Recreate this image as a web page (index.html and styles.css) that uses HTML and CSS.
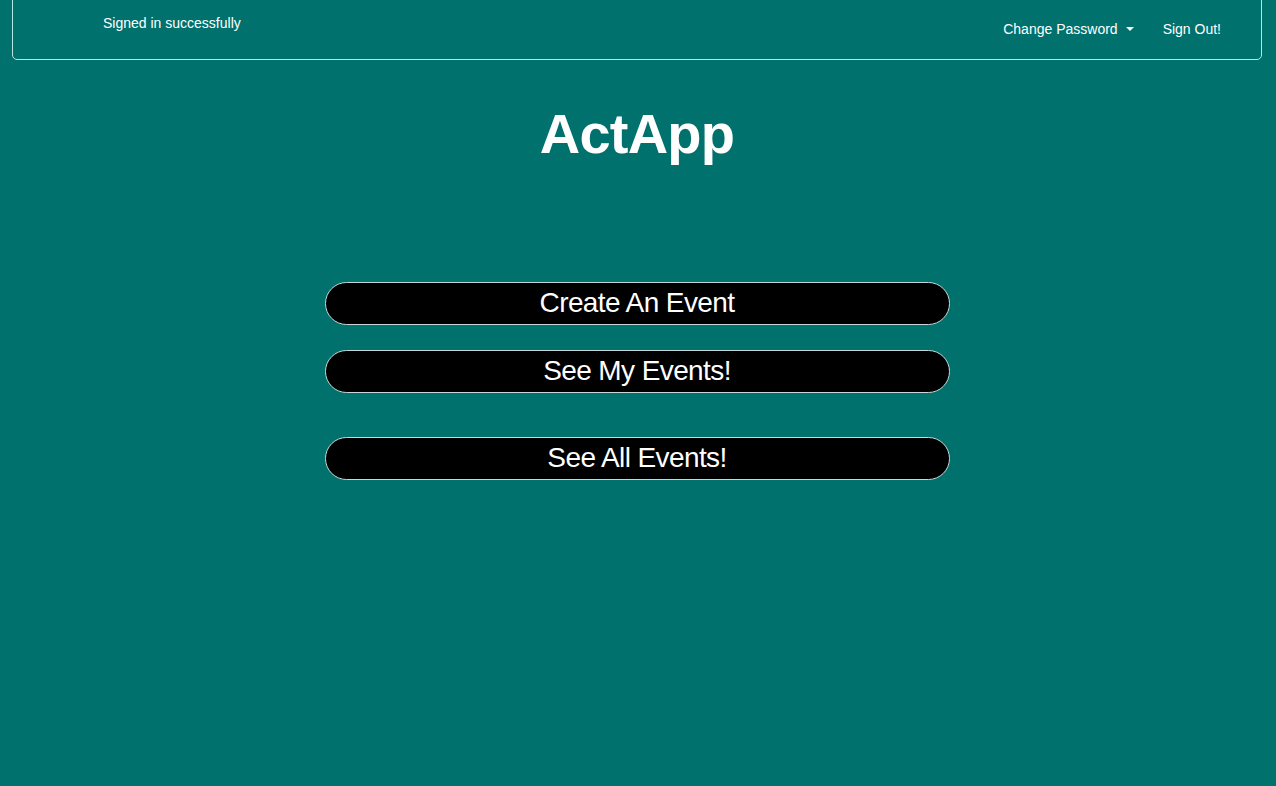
FILE: index.html
```html
<!DOCTYPE html>
<html lang="en">
<head>
<meta charset="utf-8">
<title>ActApp</title>
<link rel="stylesheet" href="styles.css">
</head>
<body>
<header class="navbar">
  <div class="flash">Signed in successfully</div>
  <nav class="nav-links">
    <a class="nav-link dropdown-toggle" href="#">Change Password</a>
    <a class="nav-link" href="#">Sign Out!</a>
  </nav>
</header>
<main class="main">
  <h1 class="title">ActApp</h1>
  <div class="actions">
    <button class="pill">Create An Event</button>
    <button class="pill">See My Events!</button>
    <button class="pill pill-gap">See All Events!</button>
  </div>
</main>
</body>
</html>
```
FILE: styles.css
```css
html, body {
  margin: 0;
  padding: 0;
  background: #00716d;
  color: #fff;
  font-family: "Liberation Sans", Arial, Helvetica, sans-serif;
}
body {
  min-height: 786px;
}
.navbar {
  margin: -10px 14px 0 12px;
  height: 70px;
  border: 1px solid #b8e6e2;
  border-radius: 5px;
  display: flex;
  justify-content: space-between;
  box-sizing: border-box;
}
.flash {
  font-size: 14px;
  padding: 24px 0 0 90px;
}
.nav-links {
  display: flex;
  align-items: center;
  padding: 8px 40px 0 0;
  gap: 29px;
}
.nav-link {
  color: #fff;
  text-decoration: none;
  font-size: 14px;
}
.dropdown-toggle::after {
  content: "";
  display: inline-block;
  margin-left: 8px;
  vertical-align: 3px;
  border-top: 4px solid #fff;
  border-left: 4px solid transparent;
  border-right: 4px solid transparent;
}
.main {
  display: flex;
  flex-direction: column;
  align-items: center;
  padding-right: 2px;
}
.title {
  margin: 39px 0 0;
  font-size: 56px;
  font-weight: bold;
  line-height: 70px;
  letter-spacing: -0.8px;
}
.actions {
  display: flex;
  flex-direction: column;
  gap: 25px;
  margin-top: 113px;
}
.pill {
  width: 625px;
  height: 43px;
  background: #000;
  color: #fff;
  border: 1px solid #c8d8d6;
  border-radius: 22px;
  font-family: "Liberation Sans", Arial, Helvetica, sans-serif;
  font-size: 28px;
  letter-spacing: -0.6px;
  padding: 0 0 2px;
  cursor: pointer;
}
.pill-gap {
  margin-top: 19px;
}
```
